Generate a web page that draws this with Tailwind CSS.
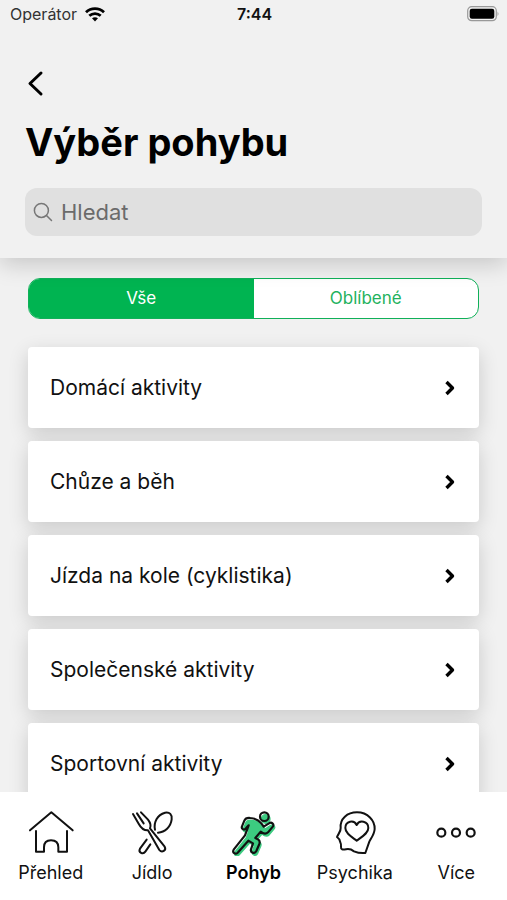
<!DOCTYPE html>
<html lang="cs">
<head>
    <meta charset="UTF-8">
    <meta name="viewport" content="width=device-width, initial-scale=1.0">
    <title>Výběr pohybu</title>
    <script src="https://cdn.jsdelivr.net/npm/@tailwindcss/browser@4"></script>
</head>
<body class="h-screen flex flex-col overflow-hidden bg-[#f1f1f1] text-[#111] font-['Inter','Liberation_Sans',sans-serif]">
    <!-- Header -->
    <header class="relative z-10 bg-[#f1f1f1] pb-[22px] shadow-[0_6px_22px_rgba(0,0,0,0.18)]">
        <div class="grid grid-cols-3 items-center h-7 pl-[10px] pr-2 text-base">
            <div class="flex items-center gap-2 text-[#333]">
                <span>Operátor</span>
                <svg class="w-5 h-[15px]" viewBox="0 0 20 15" fill="none" stroke="#000" stroke-width="2.8">
                    <path d="M1 5.2C6 .4 14 .4 19 5.2"/>
                    <path d="M4.3 8.8c3.3-3 8.1-3 11.4 0"/>
                    <path d="M7 11.3c1.8-1.4 4.2-1.4 6 0L10 14.4z" fill="#000" stroke="none"/>
                </svg>
            </div>
            <time class="text-center font-semibold">7:44</time>
            <svg class="justify-self-end w-8 h-4" viewBox="0 0 32 16">
                <rect x="0.7" y="0.7" width="28.6" height="14" rx="4" fill="none" stroke="#999" stroke-width="1.2"/>
                <rect x="2.7" y="2.7" width="24.6" height="10" rx="2.2" fill="#000"/>
                <path d="M30.6 5.4q1.6 2.3 0 4.6z" fill="#888"/>
            </svg>
        </div>
        <div class="px-[25px] pt-10">
            <button type="button" aria-label="Zpět" class="block w-8 h-8">
                <svg class="w-8 h-8" viewBox="0 0 32 32" fill="none" stroke="#000" stroke-width="3" stroke-linecap="round" stroke-linejoin="round">
                    <path d="M16 5 5 15.5 16 26"/>
                </svg>
            </button>
            <h1 class="mt-4 text-[38px] leading-[52px] font-bold text-black">Výběr pohybu</h1>
            <label class="mt-5 flex items-center gap-2 h-12 px-2 rounded-xl bg-[#e0e0e0]">
                <svg class="w-5 h-5 shrink-0" viewBox="0 0 20 20" fill="none" stroke="#777" stroke-width="1.5" stroke-linecap="round">
                    <circle cx="8.4" cy="8.4" r="7"/>
                    <path d="m13.5 13.5 5 5"/>
                </svg>
                <input type="search" placeholder="Hledat" aria-label="Hledat" class="w-full bg-transparent text-[22px] placeholder:text-[#6b6b6b] outline-none">
            </label>
        </div>
    </header>

    <!-- Activity list -->
    <main class="flex-1 min-h-0 overflow-y-auto [scrollbar-width:none] px-7 pt-5">
        <div class="grid grid-cols-2 h-[41px] overflow-hidden rounded-xl border border-[#10b059] bg-white text-[17px]">
            <button type="button" class="bg-[#00b451] text-white">Vše</button>
            <button type="button" class="text-[#1fb25e]">Oblíbené</button>
        </div>
        <ul class="mt-7 pb-6 flex flex-col gap-[13px] text-[21px]">
            <li><a href="#" class="flex items-center justify-between h-[81px] pl-[22px] pr-[23px] rounded bg-white shadow-[0_6px_20px_rgba(0,0,0,0.16)]">Domácí aktivity
                <svg class="w-3 h-4" viewBox="0 0 12 16" fill="none" stroke="#000" stroke-width="3.4" stroke-linejoin="round"><path d="m2.5 2 6 6-6 6"/></svg></a></li>
            <li><a href="#" class="flex items-center justify-between h-[81px] pl-[22px] pr-[23px] rounded bg-white shadow-[0_6px_20px_rgba(0,0,0,0.16)]">Chůze a běh
                <svg class="w-3 h-4" viewBox="0 0 12 16" fill="none" stroke="#000" stroke-width="3.4" stroke-linejoin="round"><path d="m2.5 2 6 6-6 6"/></svg></a></li>
            <li><a href="#" class="flex items-center justify-between h-[81px] pl-[22px] pr-[23px] rounded bg-white shadow-[0_6px_20px_rgba(0,0,0,0.16)]">Jízda na kole (cyklistika)
                <svg class="w-3 h-4" viewBox="0 0 12 16" fill="none" stroke="#000" stroke-width="3.4" stroke-linejoin="round"><path d="m2.5 2 6 6-6 6"/></svg></a></li>
            <li><a href="#" class="flex items-center justify-between h-[81px] pl-[22px] pr-[23px] rounded bg-white shadow-[0_6px_20px_rgba(0,0,0,0.16)]">Společenské aktivity
                <svg class="w-3 h-4" viewBox="0 0 12 16" fill="none" stroke="#000" stroke-width="3.4" stroke-linejoin="round"><path d="m2.5 2 6 6-6 6"/></svg></a></li>
            <li><a href="#" class="flex items-center justify-between h-[81px] pl-[22px] pr-[23px] rounded bg-white shadow-[0_6px_20px_rgba(0,0,0,0.16)]">Sportovní aktivity
                <svg class="w-3 h-4" viewBox="0 0 12 16" fill="none" stroke="#000" stroke-width="3.4" stroke-linejoin="round"><path d="m2.5 2 6 6-6 6"/></svg></a></li>
        </ul>
    </main>

    <!-- Bottom navigation -->
    <nav class="relative z-10 grid grid-cols-5 h-[108px] pt-4 bg-white text-lg">
        <a href="#" class="flex flex-col items-center gap-[3px]">
            <svg class="w-12 h-12" viewBox="0 0 144 144" fill="none" stroke="#111" stroke-width="6" stroke-linecap="round" stroke-linejoin="round">
                <path d="M9 67 73 13l64 54"/>
                <path d="M27 69v62h24v-13c0-13 7-21 21-21s22 8 22 21v13h26V69"/>
            </svg>
            Přehled
        </a>
        <a href="#" class="flex flex-col items-center gap-[3px]">
            <svg class="w-12 h-12" viewBox="0 0 144 144" fill="none" stroke="#111" stroke-width="6" stroke-linecap="round" stroke-linejoin="round">
                <path d="M81 65c-5-22 7-45 30-51 14-3 22 6 20 20-3 23-20 39-41 40"/>
                <path d="m15 18 17 29c7 13 15 21 28 20l34 59c8 10 22 1 16-10L66 61c4-9 1-17-6-26L39 13"/>
                <path d="m27 16 20 30"/>
                <path d="M56 95 36 122c-6 11 9 19 16 9l15-22"/>
            </svg>
            Jídlo
        </a>
        <a href="#" aria-current="page" class="flex flex-col items-center gap-[3px] font-semibold text-black">
            <svg class="w-12 h-12" viewBox="0 0 144 144" stroke-linecap="round" stroke-linejoin="round">
                <g fill="#3ccb80" stroke="#3ccb80" stroke-width="4" transform="translate(6 7)">
                    <circle cx="104" cy="26" r="13"/>
                    <path d="M52 57l-4 5C43 68 34 62 37 55l7-17c3-7 10-9 18-8 14 1 26 7 33 16l7 10 16-10c8-5 16 2 12 9l-15 18c-7 7-15 4-22-2L77 90l9 5c5 4 5 8 3 13l-9 21c-5 10-19 5-16-5l6-18-14-8-32 36c-7 7-17 0-12-9l34-43 11-30z"/>
                </g>
                <g fill="none" stroke="#111" stroke-width="6.5" transform="translate(2 0)">
                    <circle cx="104" cy="26" r="13"/>
                    <path d="M52 57l-4 5C43 68 34 62 37 55l7-17c3-7 10-9 18-8 14 1 26 7 33 16l7 10 16-10c8-5 16 2 12 9l-15 18c-7 7-15 4-22-2L77 90l9 5c5 4 5 8 3 13l-9 21c-5 10-19 5-16-5l6-18-14-8-32 36c-7 7-17 0-12-9l34-43 11-30z"/>
                </g>
            </svg>
            Pohyb
        </a>
        <a href="#" class="flex flex-col items-center gap-[3px]">
            <svg class="w-12 h-12" viewBox="0 0 144 144" fill="none" stroke="#111" stroke-width="6" stroke-linecap="round" stroke-linejoin="round">
                <path d="M29 60c-3-28 20-47 49-47 32 0 54 24 53 50-1 16-10 26-16 38l-12 34c-11 1-22 0-34-5-8-6-15-8-24-6-10 2-16 1-15-8 1-5 0-9-2-13-1-7-2-11-10-16 3-9 12-16 11-27z"/>
                <path d="M77 98c-16-12-34-22-34-38 0-21 26-26 34-9 8-17 35-12 35 9 0 16-19 26-35 38z"/>
            </svg>
            Psychika
        </a>
        <a href="#" class="flex flex-col items-center gap-[3px]">
            <svg class="w-12 h-12" viewBox="0 0 144 144" fill="none" stroke="#111" stroke-width="6.5">
                <circle cx="28" cy="74" r="12"/>
                <circle cx="72" cy="74" r="12"/>
                <circle cx="116" cy="74" r="12"/>
            </svg>
            Více
        </a>
    </nav>
</body>
</html>
